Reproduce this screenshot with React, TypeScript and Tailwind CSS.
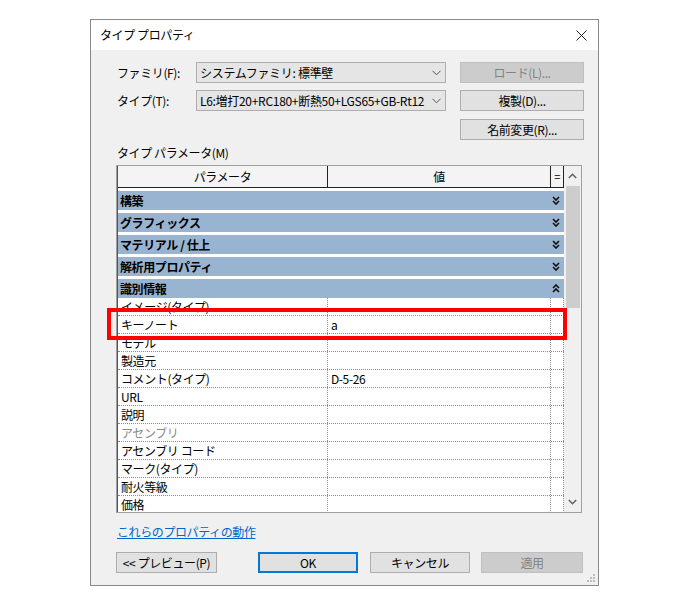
import React from 'react';

const groups = [
  { name: '構築', open: false },
  { name: 'グラフィックス', open: false },
  { name: 'マテリアル / 仕上', open: false },
  { name: '解析用プロパティ', open: false },
  { name: '識別情報', open: true },
];

const rows: { name: string; value?: string; disabled?: boolean }[] = [
  { name: 'イメージ(タイプ)' },
  { name: 'キーノート', value: 'a' },
  { name: 'モデル' },
  { name: '製造元' },
  { name: 'コメント(タイプ)', value: 'D-5-26' },
  { name: 'URL' },
  { name: '説明' },
  { name: 'アセンブリ', disabled: true },
  { name: 'アセンブリ コード' },
  { name: 'マーク(タイプ)' },
  { name: '耐火等級' },
  { name: '価格' },
];

const DoubleChevron = ({ up }: { up?: boolean }) => (
  <svg width="8" height="9" viewBox="0 0 8 9" className={up ? 'rotate-180' : ''}>
    <path d="M1 1 L4 4 L7 1 M1 5 L4 8 L7 5" fill="none" stroke="#111" strokeWidth="1.6" />
  </svg>
);

const SelectBox = ({ text }: { text: string }) => (
  <div className="w-[250px] h-[21px] border border-[#adadad] bg-[#e5e5e5] flex items-center">
    <div className="flex-1 overflow-hidden whitespace-nowrap pl-[3px] text-[12px] tracking-[-0.3px] text-black">{text}</div>
    <div className="w-[17px] flex items-center justify-center">
      <svg width="9" height="6" viewBox="0 0 9 6">
        <path d="M0.5 0.8 L4.5 4.8 L8.5 0.8" fill="none" stroke="#555" strokeWidth="1" />
      </svg>
    </div>
  </div>
);

const Btn = ({ label, w, disabled, primary, className = '' }: { label: string; w: string; disabled?: boolean; primary?: boolean; className?: string }) => (
  <div
    className={`${w} h-[21px] flex items-center justify-center text-[12px] tracking-[-0.4px] ${className} ${
      disabled
        ? 'bg-[#cccccc] border border-[#bfbfbf] text-[#838383]'
        : primary
        ? 'bg-[#e1e1e1] border-2 border-[#0078d7] text-black'
        : 'bg-[#e1e1e1] border border-[#adadad] text-black'
    }`}
  >
    {label}
  </div>
);

export default function App() {
  return (
    <div className="min-h-screen bg-white pt-[19px] pl-[90px]" style={{ fontFamily: '"Noto Sans CJK JP", "Noto Sans", sans-serif' }}>
      <div className="relative w-[509px] h-[567px] border border-[#8a8a8a] bg-[#f0f0f0] flex flex-col">
        {/* title bar */}
        <div className="h-[30px] bg-white flex items-center justify-between pl-[9px] pr-[10px]">
          <span className="text-[12px] tracking-[-0.4px] text-black">タイプ プロパティ</span>
          <svg width="11" height="11" viewBox="0 0 11 11" className="mr-[1px]">
            <path d="M0.5 0.5 L10.5 10.5 M10.5 0.5 L0.5 10.5" stroke="#222" strokeWidth="1" />
          </svg>
        </div>

        <div className="flex-1 flex flex-col pl-[25px] pr-[14px] pt-[12px]">
          <div className="flex items-center">
            <span className="w-[80px] pl-[1px] text-[12px] tracking-[-0.4px]">ファミリ(F):</span>
            <SelectBox text="システムファミリ: 標準壁" />
            <Btn label="ロード(L)..." w="w-[124px]" disabled className="ml-auto" />
          </div>
          <div className="flex items-center mt-[7px]">
            <span className="w-[80px] pl-[1px] text-[12px] tracking-[-0.4px]">タイプ(T):</span>
            <SelectBox text="L6:増打20+RC180+断熱50+LGS65+GB-Rt12" />
            <Btn label="複製(D)..." w="w-[124px]" className="ml-auto" />
          </div>
          <div className="flex mt-[8px]">
            <Btn label="名前変更(R)..." w="w-[124px]" className="ml-auto" />
          </div>

          <div className="mt-[5px] h-[16px] pl-[1px] text-[12px] leading-[16px] tracking-[-0.4px]">タイプ パラメータ(M)</div>

          {/* grid */}
          <div className="relative mt-[4px] w-[466px] h-[348px] border border-[#a0a0a0] bg-white flex">
            <div className="w-[447px] flex flex-col overflow-hidden border-l border-[#555]">
              <div className="h-[22px] flex border-b border-[#222] bg-[#f4f4f4] text-[12px] tracking-[-0.4px] shrink-0">
                <div className="w-[210px] border-r border-[#222] flex items-center justify-center">パラメータ</div>
                <div className="flex-1 border-r border-[#222] flex items-center justify-center">値</div>
                <div className="w-[13px] border-r border-[#222] flex items-center justify-center text-[11px]">=</div>
              </div>
              <div className="h-[3px] shrink-0" />
              {groups.map((g, i) => (
                <div
                  key={g.name}
                  className={`h-[19px] shrink-0 bg-[#99b4d1] flex items-center justify-between pl-[2px] pr-[4px] text-[12px] font-bold tracking-[-0.4px] text-black ${
                    i < groups.length - 1 ? 'mb-[3px]' : ''
                  }`}
                >
                  <span>{g.name}</span>
                  <DoubleChevron up={g.open} />
                </div>
              ))}
              {rows.map((r) => (
                <div key={r.name} className="h-[18px] shrink-0 flex border-b border-dotted border-[#8c8c8c] text-[12px] tracking-[-0.4px]">
                  <div className={`w-[210px] border-r border-dotted border-[#8c8c8c] pl-[3px] leading-[17px] whitespace-nowrap ${r.disabled ? 'text-[#8a8a8a]' : 'text-black'}`}>
                    {r.name}
                  </div>
                  <div className="flex-1 border-r border-dotted border-[#8c8c8c] pl-[3px] leading-[17px] text-black">{r.value}</div>
                  <div className="w-[13px] border-r border-dotted border-[#8c8c8c]" />
                </div>
              ))}
            </div>

            {/* scrollbar */}
            <div className="w-[17px] bg-[#f0f0f0] flex flex-col">
              <div className="h-[20px] flex items-center justify-center">
                <svg width="9" height="6" viewBox="0 0 9 6">
                  <path d="M0.8 5 L4.5 1.3 L8.2 5" fill="none" stroke="#606060" strokeWidth="1.5" />
                </svg>
              </div>
              <div className="h-[122px] ml-[2px] mr-[1px] bg-[#cdcdcd]" />
              <div className="flex-1" />
              <div className="h-[20px] flex items-center justify-center">
                <svg width="9" height="6" viewBox="0 0 9 6">
                  <path d="M0.8 1 L4.5 4.7 L8.2 1" fill="none" stroke="#606060" strokeWidth="1.5" />
                </svg>
              </div>
            </div>

            {/* highlight */}
            <div className="absolute left-[-10px] top-[142px] w-[460px] h-[32px] border-[4px] border-[#ff0000] pointer-events-none" />
          </div>

          <div className="mt-[10px] h-[14px] leading-[14px] pl-[1px]">
            <span className="text-[12px] tracking-[-0.4px] text-[#0066cc] underline">これらのプロパティの動作</span>
          </div>

          <div className="mt-[15px] flex">
            <Btn label="<< プレビュー(P)" w="w-[101px]" />
            <Btn label="OK" w="w-[100px]" primary className="ml-[41px]" />
            <Btn label="キャンセル" w="w-[100px]" className="ml-[12px]" />
            <Btn label="適用" w="w-[102px]" disabled className="ml-[11px]" />
          </div>
        </div>

        {/* resize grip */}
        <svg width="10" height="10" viewBox="0 0 10 10" className="absolute right-[2px] bottom-[2px]">
          <rect x="7" y="1" width="2" height="2" fill="#bdbdbd" />
          <rect x="4" y="4" width="2" height="2" fill="#bdbdbd" />
          <rect x="7" y="4" width="2" height="2" fill="#bdbdbd" />
          <rect x="1" y="7" width="2" height="2" fill="#bdbdbd" />
          <rect x="4" y="7" width="2" height="2" fill="#bdbdbd" />
          <rect x="7" y="7" width="2" height="2" fill="#bdbdbd" />
        </svg>
      </div>
    </div>
  );
}
